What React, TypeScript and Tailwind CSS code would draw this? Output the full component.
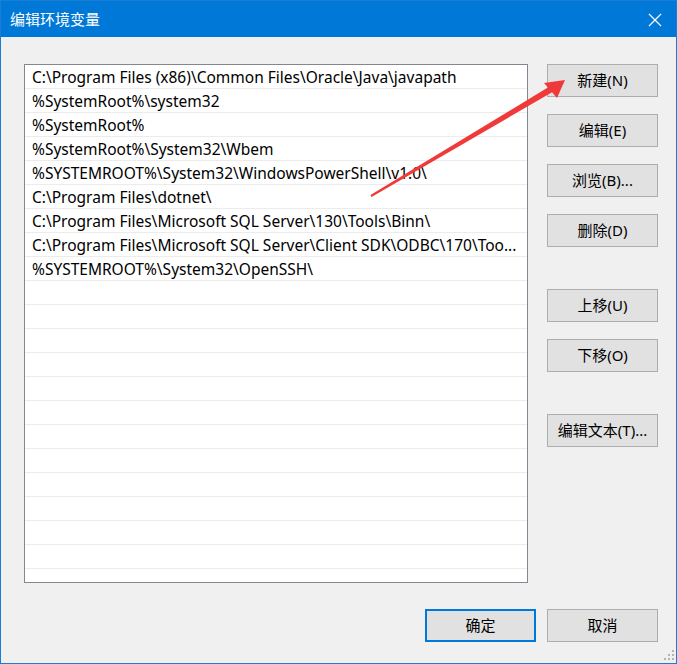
const paths = [
  "C:\\Program Files (x86)\\Common Files\\Oracle\\Java\\javapath",
  "%SystemRoot%\\system32",
  "%SystemRoot%",
  "%SystemRoot%\\System32\\Wbem",
  "%SYSTEMROOT%\\System32\\WindowsPowerShell\\v1.0\\",
  "C:\\Program Files\\dotnet\\",
  "C:\\Program Files\\Microsoft SQL Server\\130\\Tools\\Binn\\",
  "C:\\Program Files\\Microsoft SQL Server\\Client SDK\\ODBC\\170\\Too...",
  "%SYSTEMROOT%\\System32\\OpenSSH\\",
];

const rows = [...paths, ...Array(12).fill("")];

const font = { fontFamily: '"Noto Sans", "Noto Sans CJK SC", sans-serif' };

function Btn({ label, primary }: { label: string; primary?: boolean }) {
  return (
    <button
      type="button"
      className={`flex h-[33px] w-[111px] shrink-0 items-center justify-center bg-[#e1e1e1] text-[15px] text-black ${
        primary ? "border-2 border-[#0078d7]" : "border border-[#adadad]"
      }`}
    >
      {label}
    </button>
  );
}

export default function App() {
  return (
    <div
      style={font}
      className="relative flex h-[664px] w-[677px] flex-col border border-[#1a7fd4] bg-[#f0f0f0] text-black"
    >
      {/* title bar */}
      <div className="flex h-[36px] shrink-0 items-center justify-between bg-[#0078d7] pl-[9px] pr-[14px] text-[15px] text-white">
        <span>编辑环境变量</span>
        <svg width="14" height="14" viewBox="0 0 14 14" className="mt-[2px]">
          <path d="M1 1 L13 13 M13 1 L1 13" stroke="white" strokeWidth="1.2" />
        </svg>
      </div>

      <div className="flex pl-[23px] pt-[27px]">
        <div className="h-[519px] w-[504px] overflow-hidden border border-[#828790] bg-white">
          {rows.map((p, i) => (
            <div
              key={i}
              className="flex h-[24px] items-center overflow-hidden whitespace-nowrap border-b border-[#ececec] pl-[7px] pt-[2px] text-[15.5px]"
            >
              {p}
            </div>
          ))}
        </div>

        <div className="ml-[19px] flex flex-col">
          <Btn label="新建(N)" />
          <div className="mt-[17px]"><Btn label="编辑(E)" /></div>
          <div className="mt-[17px]"><Btn label="浏览(B)..." /></div>
          <div className="mt-[17px]"><Btn label="删除(D)" /></div>
          <div className="mt-[42px]"><Btn label="上移(U)" /></div>
          <div className="mt-[17px]"><Btn label="下移(O)" /></div>
          <div className="mt-[42px]"><Btn label="编辑文本(T)..." /></div>
        </div>
      </div>

      <div className="mt-[26px] flex justify-end gap-[11px] pr-[18px]">
        <Btn label="确定" primary />
        <Btn label="取消" />
      </div>

      {/* resize grip */}
      <svg width="14" height="14" viewBox="0 0 14 14" className="absolute bottom-[1px] right-[1px]">
        <g fill="#b4b4b4">
          <rect x="11" y="2" width="2" height="2" />
          <rect x="7" y="6" width="2" height="2" />
          <rect x="11" y="6" width="2" height="2" />
          <rect x="3" y="10" width="2" height="2" />
          <rect x="7" y="10" width="2" height="2" />
          <rect x="11" y="10" width="2" height="2" />
        </g>
      </svg>

      {/* red annotation arrow */}
      <svg
        width="677"
        height="664"
        viewBox="0 0 677 664"
        className="pointer-events-none absolute left-[-1px] top-[-1px]"
      >
        <polygon points="370.5,195 549.5,86.5 552.5,92 371.5,197" fill="#f03a3a" />
        <polygon points="565,80 544,83 557,98" fill="#f03a3a" />
      </svg>
    </div>
  );
}
